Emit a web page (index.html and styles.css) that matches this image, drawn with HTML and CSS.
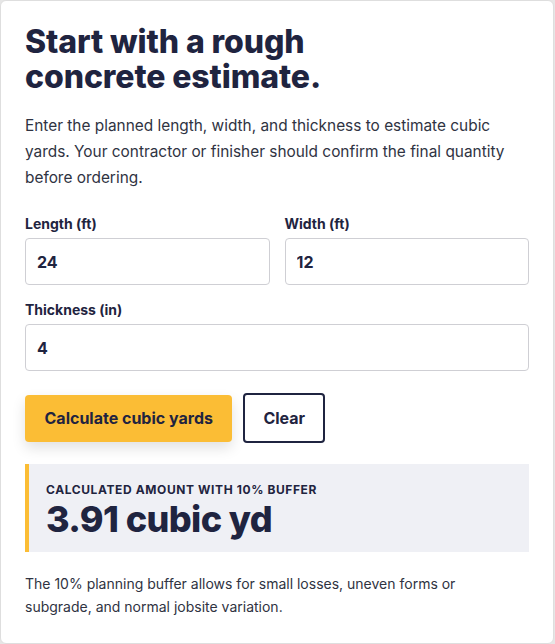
FILE: index.html
```html
<!DOCTYPE html>
<html lang="en">
<head>
  <meta charset="UTF-8">
  <meta name="viewport" content="width=device-width, initial-scale=1.0">
  <title>Concrete Estimate</title>
  <link rel="stylesheet" href="styles.css">
</head>
<body>

  <div class="card">
    <h1>Start with a rough<br>concrete estimate.</h1>

    <p class="intro">Enter the planned length, width, and thickness to estimate cubic yards. Your contractor or finisher should confirm the final quantity before ordering.</p>

    <!-- Inputs -->
    <div class="row">
      <div class="field">
        <label for="length">Length (ft)</label>
        <input type="text" id="length" value="24">
      </div>
      <div class="field">
        <label for="width">Width (ft)</label>
        <input type="text" id="width" value="12">
      </div>
    </div>

    <div class="field">
      <label for="thickness">Thickness (in)</label>
      <input type="text" id="thickness" value="4">
    </div>

    <div class="actions">
      <button class="btn-primary">Calculate cubic yards</button>
      <button class="btn-outline">Clear</button>
    </div>

    <!-- Result -->
    <div class="result">
      <div class="result-label">Calculated amount with 10% buffer</div>
      <div class="result-value">3.91 cubic yd</div>
    </div>

    <p class="note">The 10% planning buffer allows for small losses, uneven forms or subgrade, and normal jobsite variation.</p>
  </div>

</body>
</html>
```

FILE: styles.css
```css
body {
  margin: 0;
  font-family: Inter, "Noto Sans", Arial, sans-serif;
  background-color: #e6e6e6;
  color: #1f2440;
}

.card {
  background-color: #ffffff;
  border: 1px solid #dedede;
  border-radius: 6px;
  margin: 0 1px 2px 0;
  padding: 23px 24px 25px;
}

h1 {
  font-size: 32px;
  font-weight: 800;
  line-height: 1.1;
  letter-spacing: -0.1px;
  margin: 0 0 19px;
}

.intro {
  font-size: 15.4px;
  line-height: 25.6px;
  color: #2f3342;
  margin: 0 0 25px;
}

.row {
  display: grid;
  grid-template-columns: 1fr 1fr;
  gap: 15px;
}

.field {
  display: flex;
  flex-direction: column;
  min-width: 0;
  margin-bottom: 16px;
}

.field label {
  font-size: 14px;
  font-weight: 700;
  margin-bottom: 6px;
}

.field input {
  font-family: inherit;
  font-size: 16px;
  font-weight: 700;
  color: #1f2440;
  border: 1px solid #cfcfd4;
  border-radius: 4px;
  padding: 12px 11px;
  width: 100%;
  min-width: 0;
  height: 47px;
  box-sizing: border-box;
}

.actions {
  display: flex;
  align-items: center;
  gap: 11px;
  margin-top: 22px;
}

button {
  font-family: inherit;
  font-size: 16px;
  font-weight: 700;
  color: #1f2440;
  cursor: pointer;
  border-radius: 4px;
}

.btn-primary {
  background-color: #fbbd35;
  border: none;
  height: 47px;
  padding: 0 19.5px;
  box-shadow: 0 6px 14px rgba(0, 0, 0, 0.12);
}

.btn-outline {
  background-color: #ffffff;
  border: 2px solid #1f2440;
  height: 50px;
  padding: 0 18px;
}

.result {
  background-color: #eff0f5;
  border-left: 4px solid #fbbd35;
  margin-top: 21px;
  padding: 18px 17px 13px;
}

.result-label {
  font-size: 12px;
  font-weight: 700;
  text-transform: uppercase;
  letter-spacing: 0.6px;
  margin-bottom: 2px;
}

.result-value {
  font-size: 36px;
  font-weight: 800;
  line-height: 40px;
  letter-spacing: -0.6px;
}

.note {
  font-size: 14px;
  line-height: 23px;
  color: #2f3342;
  max-width: 470px;
  margin: 20px 0 0;
}
```
